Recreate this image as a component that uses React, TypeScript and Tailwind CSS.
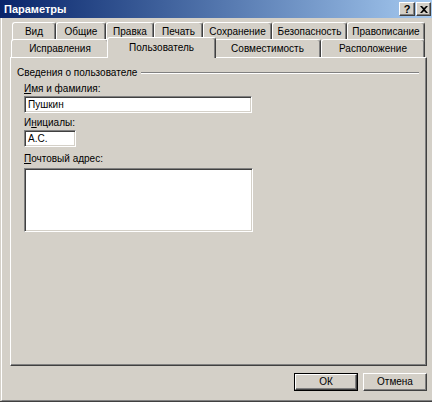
import React from "react";

const font = { fontFamily: '"Liberation Sans", Arial, sans-serif' };

function Tab1({ w, label }: { w: string; label: string }) {
  return (
    <div
      className={`${w} h-[19px] shrink-0 border-t border-l border-r border-t-white border-l-white border-r-[#404040] rounded-t-[3px] shadow-[inset_-1px_0_0_#808080] flex justify-center pt-[3px] text-[10px] leading-[12px] text-black whitespace-nowrap`}
    >
      {label}
    </div>
  );
}

function Tab2({ w, label }: { w: string; label: string }) {
  return (
    <div
      className={`${w} h-[18px] shrink-0 border-t border-l border-r border-t-white border-l-white border-r-[#404040] rounded-t-[3px] shadow-[inset_-1px_0_0_#808080] bg-[#d4d0c8] flex justify-center pt-[3px] text-[10px] leading-[12px] text-black whitespace-nowrap`}
    >
      {label}
    </div>
  );
}

function Sunken({ className, children }: { className: string; children?: React.ReactNode }) {
  return (
    <div
      className={`${className} bg-white border-t border-l border-b border-r border-t-[#808080] border-l-[#808080] border-b-white border-r-white shadow-[inset_1px_1px_0_#404040,inset_-1px_-1px_0_#d4d0c8] text-[10px] leading-[12px] text-black pl-[3px] pt-[2px]`}
    >
      {children}
    </div>
  );
}

export default function App() {
  return (
    <div className="w-[432px] h-[402px] bg-[#d4d0c8] flex flex-col overflow-hidden" style={font}>
      {/* title bar */}
      <div className="h-[18px] shrink-0 bg-gradient-to-r from-[#0a246a] to-[#a6caf0] flex items-center pl-[4px] pr-[1px]">
        <div className="text-white font-bold text-[11px] leading-[13px] flex-1">Параметры</div>
        <div className="flex gap-[1px] items-center">
          <div className="w-[16px] h-[14px] bg-[#d4d0c8] border-t border-l border-b border-r border-t-white border-l-white border-b-[#404040] border-r-[#404040] shadow-[inset_-1px_-1px_0_#808080] flex items-center justify-center text-[11px] font-bold leading-[11px] text-black">
            ?
          </div>
          <div className="w-[15px] h-[14px] bg-[#d4d0c8] border-t border-l border-b border-r border-t-white border-l-white border-b-[#404040] border-r-[#404040] shadow-[inset_-1px_-1px_0_#808080] flex items-center justify-center">
            <svg width="8" height="7" viewBox="0 0 8 7">
              <path d="M0 0h2l2 2 2-2h2L5 3.5 8 7H6L4 5 2 7H0l3-3.5z" fill="#000" />
            </svg>
          </div>
        </div>
      </div>

      {/* body */}
      <div className="flex-1 flex flex-col border-l border-l-white ml-[1px] border-b border-b-[#808080] relative">
        {/* tab rows */}
        <div className="mt-[4px] flex flex-col">
          <div className="flex pl-[10px] h-[17px]">
            <Tab1 w="w-[44px]" label="Вид" />
            <Tab1 w="w-[50px]" label="Общие" />
            <Tab1 w="w-[48px]" label="Правка" />
            <Tab1 w="w-[49px]" label="Печать" />
            <Tab1 w="w-[69px]" label="Сохранение" />
            <Tab1 w="w-[75px]" label="Безопасность" />
            <Tab1 w="w-[78px]" label="Правописание" />
          </div>
          <div className="flex pl-[9px] h-[18px] relative z-10">
            <Tab2 w="w-[98px]" label="Исправления" />
            <div className="w-[109px] h-[21px] -mt-[2px] -mx-[2px] shrink-0 relative z-20 bg-[#d4d0c8] border-t border-l border-r border-t-white border-l-white border-r-[#404040] rounded-t-[3px] shadow-[inset_-1px_0_0_#808080] flex justify-center pt-[4px] text-[10px] leading-[12px] text-black">
              Пользователь
            </div>
            <Tab2 w="w-[107px]" label="Совместимость" />
            <Tab2 w="w-[104px]" label="Расположение" />
          </div>
        </div>

        {/* panel */}
        <div className="ml-[8px] w-[417px] h-[309px] border-t border-l border-b border-r border-t-white border-l-white border-b-[#404040] border-r-[#404040] shadow-[inset_-1px_-1px_0_#808080] flex flex-col pt-[9px]">
          <div className="flex items-center pl-[6px] pr-[7px]">
            <span className="text-[10px] leading-[12px] text-black pr-[4px]">Сведения о пользователе</span>
            <div className="flex-1 border-t border-t-[#808080] border-b border-b-white h-0" />
          </div>
          <div className="flex flex-col pl-[13px] mt-[4px]">
            <div className="text-[10px] leading-[12px] text-black">
              <span className="underline">И</span>мя и фамилия:
            </div>
            <Sunken className="w-[228px] h-[17px] mt-[1px]">Пушкин</Sunken>
            <div className="text-[10px] leading-[12px] text-black mt-[4px]">
              И<span className="underline">н</span>ициалы:
            </div>
            <Sunken className="w-[52px] h-[17px] mt-[1px]">А.С.</Sunken>
            <div className="text-[10px] leading-[12px] text-black mt-[6px]">
              <span className="underline">П</span>очтовый адрес:
            </div>
            <Sunken className="w-[229px] h-[64px] mt-[3px]" />
          </div>
        </div>

        {/* buttons */}
        <div className="flex justify-end gap-[5px] pr-[5px] mt-[7px]">
          <div className="w-[64px] h-[18px] border border-black flex">
            <div className="flex-1 border-t border-l border-b border-r border-t-white border-l-white border-b-[#404040] border-r-[#404040] shadow-[inset_-1px_-1px_0_#808080] flex items-center justify-center text-[10px] leading-[12px] text-black">
              ОК
            </div>
          </div>
          <div className="w-[64px] h-[18px] border-t border-l border-b border-r border-t-white border-l-white border-b-[#404040] border-r-[#404040] shadow-[inset_-1px_-1px_0_#808080] flex items-center justify-center text-[10px] leading-[12px] text-black">
            Отмена
          </div>
        </div>
      </div>
      <div className="h-[1px] bg-[#404040] shrink-0" />
    </div>
  );
}
